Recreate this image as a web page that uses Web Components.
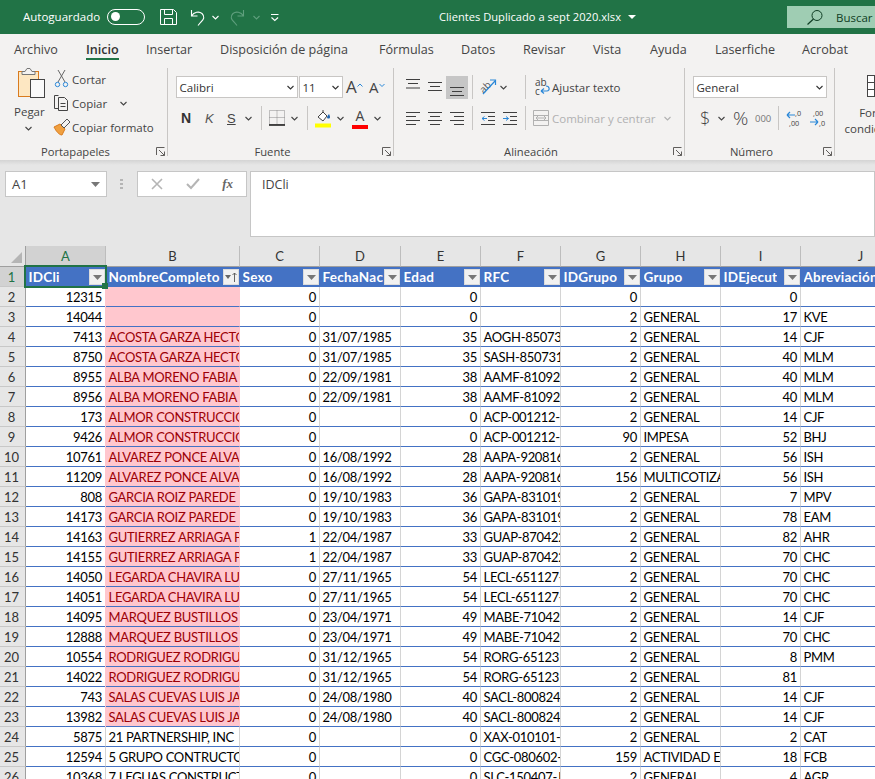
<!DOCTYPE html>
<html lang="es"><head><meta charset="utf-8"><title>Clientes Duplicado a sept 2020.xlsx</title>
<style>
html,body{margin:0;height:779px;overflow:hidden;background:#fff}
body{display:flex;flex-direction:column;width:875px;font-family:"Open Sans","Noto Sans",sans-serif}
</style></head><body>
<x-title-bar></x-title-bar>
<x-ribbon-tabs></x-ribbon-tabs>
<x-ribbon></x-ribbon>
<x-formula-bar></x-formula-bar>
<x-sheet></x-sheet>
<script>
const place=(start,items)=>{let c=start;return items.map(([x,w,h])=>{const m=x-c;c=x+w;return `<div class="it" style="margin-left:${m}px;width:${w}px">${h}</div>`}).join('')};
const chev=(col='#444')=>`<svg width="7" height="5" viewBox="0 0 7 5"><path d="M.5 1l3 3 3-3" fill="none" stroke="${col}" stroke-width="1.1"/></svg>`;
const svg=(w,h,body)=>`<svg width="${w}" height="${h}" viewBox="0 0 ${w} ${h}" style="display:block;flex:none">${body}</svg>`;
const lines=(w,h,arr,col='#3f3f3f')=>svg(w,h,arr.map(([x,y,l])=>`<path d="M${x} ${y}h${l}" stroke="${col}" fill="none"/>`).join(''));
class Base extends HTMLElement{constructor(){super();this.attachShadow({mode:'open'}).innerHTML=this.render()}render(){return ''}}

customElements.define('x-toggle',class extends Base{render(){return `<style>:host{display:block;width:38px;height:16px;box-sizing:border-box;border:1.4px solid #fff;border-radius:8px;margin-bottom:1px}
b{display:block;width:9px;height:9px;border-radius:50%;background:#fff;margin:2px 0 0 3px}</style><b></b>`}});

customElements.define('x-title-bar',class extends Base{render(){return `<style>
:host{display:flex;flex:none;height:34px;background:#217346;color:#fff;font:11.5px "Open Sans",sans-serif;align-items:center;overflow:hidden}
.it{flex:none;display:flex;align-items:center;white-space:nowrap}
.s{background:#9fcdb3;height:22px;color:#0f3d24;width:88px;font-size:11.5px}
</style>${place(0,[
[23,82,'<span style="margin-bottom:1px">Autoguardado</span>'],
[107,38,'<x-toggle></x-toggle>'],
[160,17,svg(17,16,'<path d="M.5.5h13l3 3v12H.5zM4.5.5v5h8v-5M4.5 15.5v-6h8v6" fill="none" stroke="#fff"/>')],
[190,16,svg(16,17,'<path d="M1.5 1v6h6M1.5 7C4 3 9 2 12 4.500c3 3 2 6-1 8.500l-3 3.500" fill="none" stroke="#fff" stroke-width="1.100"/>')],
[212,7,chev('#fff')],
[229,16,svg(16,17,'<path d="M14.500 1v6h-6M14.500 7C12 3 7 2 4 4.500c-3 3-2 6 1 8.500l3 3.500" fill="none" stroke="#5f9f7d" stroke-width="1.100"/>')],
[253,7,chev('#5f9f7d')],
[271,8,svg(8,9,'<path d="M0 1.500h7.500" stroke="#fff"/><path d="M.5 4.500l3.300 3 3.300-3" fill="none" stroke="#fff" stroke-width="1.100"/>')],
[439,184,'<span style="font-size:11.15px;margin-bottom:2px">Clientes Duplicado a sept 2020.xlsx</span>'],
[628,8,svg(8,4,'<path d="M0 0h8L4 4z" fill="#fff"/>')],
[787,88,`<div class="it s">${svg(49,16,'<circle cx="30" cy="6.500" r="5" fill="none" stroke="#0f3d24"/><path d="M26.500 10L20.500 15.500" stroke="#0f3d24" stroke-width="1.200"/>')}<span>Buscar</span></div>`]
])}`}});

customElements.define('x-ribbon-tabs',class extends Base{render(){
const t=[['Archivo',14],['Inicio',86],['Insertar',146],['Disposición de página',220],['Fórmulas',379],['Datos',461],['Revisar',523],['Vista',593],['Ayuda',650],['Laserfiche',715],['Acrobat',802]];
return `<style>:host{display:flex;flex:none;height:30px;background:#f3f2f1;color:#444;font:12.6px "Open Sans",sans-serif;overflow:hidden}
.it{flex:none;height:30px;line-height:32px;white-space:nowrap}
.on{font-weight:600;color:#333;display:inline-block;width:33px;height:24px;border-bottom:2.5px solid #217346;box-sizing:content-box;line-height:32px}
</style>${place(0,t.map(([n,x],i)=>[x,(i<t.length-1?t[i+1][1]-x-4:60),i==1?`<span class="on">${n}</span>`:n]))}`}});

customElements.define('x-ribbon-group',class extends Base{render(){return `<style>
:host{display:flex;flex:none;height:96px}
.m{flex:1;min-width:0;display:flex;flex-direction:column}
.c{height:78px;display:flex;flex-direction:column}
.f{height:18px;display:flex;align-items:center;font-size:11.2px;color:#444;line-height:18px}
.l{flex:1;text-align:center;white-space:nowrap;padding-top:2px}
.la{width:16px;flex:none;display:flex;justify-content:flex-end;padding-right:2px;box-sizing:border-box}
.sep{flex:none;width:1px;height:88px;margin-top:4px;background:#c8c6c4}
</style><div class="m"><div class="c"><slot></slot></div><div class="f"><span class="l"></span><span class="la">${svg(9,9,'<path d="M.5 8V.5H8.500" fill="none" stroke="#605e5c"/><path d="M3 3l5.500 5.500M8.500 4.500v4h-4" fill="none" stroke="#605e5c"/>')}</span></div></div><div class="sep"></div>`}
connectedCallback(){this.shadowRoot.querySelector('.l').textContent=this.getAttribute('label')}});

customElements.define('x-combo',class extends Base{render(){return `<style>
:host{display:flex;box-sizing:border-box;height:22px;width:100%;background:#fff;border:1px solid #c8c6c4;align-items:center;justify-content:space-between;padding:0 3px 0 2.5px;font-size:11.5px;color:#333}
</style><span><slot></slot></span>${chev('#333')}`}});

customElements.define('x-ribbon',class extends Base{render(){
const L=(a)=>lines(14,24,a);
const sep=(h=24)=>`<i style="display:block;width:1px;height:${h}px;background:#c8c6c4"></i>`;
const d='#b1b1b1';
return `<style>
:host{display:flex;flex:none;height:96px;background:#f3f2f1;color:#444;font:11.5px "Open Sans",sans-serif;overflow:hidden}
.it{flex:none;display:flex;align-items:center;white-space:nowrap;height:24px}
.row{display:flex;height:24px;align-items:center}
.r1{margin-top:11px}.r2{margin-top:7px}
.clip{display:flex}
.pcol{flex:none;margin-left:14px;width:32px;display:flex;flex-direction:column}
.pcol span{display:block;line-height:16px;margin-top:2px;white-space:nowrap}
.rows{display:flex;flex-direction:column;margin-left:7px;margin-top:3px}
.rows .row{height:24px}
.n{font:bold 14px "Liberation Sans",sans-serif;color:#333}
.k{font:italic 13px "Liberation Sans",sans-serif;color:#555}
.u{font:13px "Liberation Sans",sans-serif;text-decoration:underline;color:#444}
.off{color:${d};margin-top:1px}
.sel{background:#c6c6c6;height:23px;width:22px;display:flex;justify-content:center;align-items:center}
.fmt{width:86px;text-align:center;display:flex;flex-direction:column;align-items:center;line-height:16px;padding-top:11px;white-space:nowrap;flex:none}
.fmt span{display:block}
svg text{font-family:"Open Sans",sans-serif}
</style>
<x-ribbon-group label="Portapapeles" style="width:168px"><div class="clip">
 <div class="pcol">
  ${svg(32,38,`<g transform="translate(-1 2)"><rect x="5.500" y="5.500" width="20" height="25" fill="#fde7c2" stroke="#d97b1e"/><path d="M9 5.500h3l2-3h3l2 3h3v3H9z" fill="#f3f2f1" stroke="#777"/><rect x="17.500" y="13.500" width="14" height="18" fill="#f9f9f9" stroke="#444"/></g>`)}
  <span>Pegar</span>
  <div style="margin:6px 0 0 11px;line-height:0">${chev()}</div>
 </div>
 <div class="rows">
  <div class="row">${svg(19,18,'<g fill="none"><path d="M5 0l7 12M12 0L5 12" stroke="#666"/><circle cx="4.500" cy="14.500" r="2.200" stroke="#2b88d8"/><circle cx="12.500" cy="14.500" r="2.200" stroke="#2b88d8"/></g>')}<span>Cortar</span></div>
  <div class="row">${svg(19,18,'<path d="M5.500 1.500H1.500v13H5M5.500 3.500h6l3 3v10h-9z" fill="none" stroke="#444"/><path d="M7.500 9.500h5M7.500 12.500h5" stroke="#444"/>')}<span>Copiar</span><span style="margin-left:13px;line-height:0">${chev()}</span></div>
  <div class="row">${svg(19,18,'<path d="M1 9l6-3 5 5-3 6c-3 0-6-4-8-8z" fill="#f0a040" stroke="#d97b1e"/><path d="M8 7l6-6 3 3-6 6z" fill="#f3f2f1" stroke="#555"/>')}<span>Copiar formato</span></div>
 </div>
</div></x-ribbon-group>
<x-ribbon-group label="Fuente" style="width:226px">
 <div class="row r1">${place(168,[
 [176,122,'<x-combo>Calibri</x-combo>'],
 [299,44,'<x-combo>11</x-combo>'],
 [346,17,`<span style="font-size:17px;line-height:24px">A</span>${svg(6,10,'<path d="M.5 4.500l2.500-2.500 2.500 2.500" fill="none" stroke="#2b88d8"/>')}`],
 [369,17,`<span style="font-size:15px;line-height:24px">A</span>${svg(6,10,'<path d="M.5 2l2.500 2.500L5.500 2" fill="none" stroke="#2b88d8"/>')}`]
 ])}</div>
 <div class="row r2">${place(168,[
 [181,11,'<span class="n">N</span>'],
 [205,8,'<span class="k">K</span>'],
 [227,9,'<span class="u">S</span>'],
 [245,7,chev()],
 [261,1,sep()],
 [269,16,svg(16,18,'<path d="M.5 1.500h15v14H.5z" fill="none" stroke="#8a8a8a" stroke-dasharray="1 1"/><path d="M8 1.500v14M.5 8.500h15" stroke="#8a8a8a" stroke-dasharray="1 1"/><path d="M0 16h16" stroke="#222" stroke-width="1.600"/>')],
 [291,7,chev()],
 [307,1,sep()],
 [315,16,svg(16,20,'<path d="M3 9l5-5 4 4-4 5z" fill="#fff" stroke="#444"/><path d="M8 2v3" stroke="#444"/><path d="M12 9c1-2 2-3 2-3s1 2 1 3-.5 1.500-1.500 1.500S12 10 12 9z" fill="#2266b0"/><rect y="15.500" width="16" height="4" fill="#ffff00"/>')],
 [337,7,chev()],
 [352,16,`<div style="width:16px;height:24px;text-align:center"><span style="font-size:14px;line-height:20px">A</span><i style="display:block;background:#ff0000;height:4px;margin-top:-1px"></i></div>`],
 [374,7,chev()]
 ])}</div>
</x-ribbon-group>
<x-ribbon-group label="Alineación" style="width:291px">
 <div class="row r1">${place(394,[
 [406,14,L([[0,4.500,14],[2,8.500,10],[0,13,14]])],
 [428,14,L([[0,7.500,14],[2,11.500,10],[0,15.500,14]])],
 [446,22,`<div class="sel">${L([[0,12.500,14],[2,16.500,10],[0,20.500,14]])}</div>`],
 [472,1,sep()],
 [480,17,svg(17,20,'<text x="0" y="14" font-size="10" fill="#555" transform="rotate(-45 5 11)">ab</text><path d="M3 17L15 4M10 3h5.500v5" fill="none" stroke="#2b88d8" stroke-width="1.200"/>')],
 [500,7,chev()],
 [525,1,sep(24)],
 [535,17,svg(17,20,'<text x="0" y="9" font-size="10" fill="#444">ab</text><text x="0" y="18" font-size="10" fill="#444">c</text><path d="M6 14h6c3 0 3-5-1-5M6 14l3-2.500M6 14l3 2.500" fill="none" stroke="#2b88d8" stroke-width="1.200"/>')],
 [552,70,'<span>Ajustar texto</span>']
 ])}</div>
 <div class="row r2">${place(394,[
 [406,14,L([[0,6.500,14],[0,10.500,10],[0,14.500,14],[0,18.500,10]])],
 [428,14,L([[0,6.500,14],[2,10.500,10],[0,14.500,14],[2,18.500,10]])],
 [450,14,L([[0,6.500,14],[4,10.500,10],[0,14.500,14],[4,18.500,10]])],
 [472,1,sep()],
 [481,14,svg(14,24,'<path d="M0 6.500h14M7 10.500h7M7 14.500h7M0 18.500h14" stroke="#3f3f3f"/><path d="M1 12.500h5M1 12.500l2.500-2M1 12.500l2.500 2" fill="none" stroke="#2b88d8"/>')],
 [503,14,svg(14,24,'<path d="M0 6.500h14M7 10.500h7M7 14.500h7M0 18.500h14" stroke="#3f3f3f"/><path d="M0 12.500h5.500M5.500 12.500L3 10.500M5.500 12.500L3 14.500" fill="none" stroke="#2b88d8"/>')],
 [525,1,sep(24)],
 [533,16,svg(16,16,`<path d="M.5.500h15v15H.5zM.5 5.500h15M.5 10.500h15" fill="none" stroke="${d}"/><path d="M3 8h10M3 8l2-2M3 8l2 2M13 8l-2-2M13 8l-2 2" fill="none" stroke="${d}"/>`)],
 [552,104,'<span class="off">Combinar y centrar</span>'],
 [664,7,chev(d)]
 ])}</div>
</x-ribbon-group>
<x-ribbon-group label="Número" style="width:150px">
 <div class="row r1">${place(685,[[693,134,'<x-combo>General</x-combo>']])}</div>
 <div class="row r2">${place(685,[
 [700,12,'<span style="font-size:18px;font-weight:300;color:#444">$</span>'],
 [718,7,chev()],
 [733,17,'<span style="font-size:19px;font-weight:300;color:#444">%</span>'],
 [755,17,'<span style="font-size:9.5px;color:#777">000</span>'],
 [778,1,sep()],
 [786,17,svg(17,20,'<path d="M1 7h8M1 7l3-3M1 7l3 3" fill="none" stroke="#2b88d8" stroke-width="1.200"/><text x="9" y="8" font-size="7.300" fill="#444">,0</text><text x="3" y="18" font-size="7.300" fill="#444">,00</text>')],
 [809,17,svg(17,20,'<text x="4" y="8" font-size="7.300" fill="#444">,00</text><text x="10" y="18" font-size="7.300" fill="#444">,0</text><path d="M1 14h8M9 14l-3-3M9 14l-3 3" fill="none" stroke="#2b88d8" stroke-width="1.200"/>')]
 ])}</div>
</x-ribbon-group>
<div class="fmt">${svg(22,22,'<rect x=".5" y=".5" width="21" height="21" fill="#fff" stroke="#444"/><rect x="8" y="1" width="13" height="6" fill="#e8413c"/><rect x="8" y="8" width="13" height="6" fill="#2b88d8"/><rect x="8" y="15" width="13" height="6" fill="#e8413c"/><path d="M.5 7.500h21M.5 14.500h21M7.500 .5v21" stroke="#444"/>')}<span style="margin-top:8px;padding-left:8px">Formato</span><span style="padding-right:6px">condicional</span></div>
`}});

customElements.define('x-formula-bar',class extends Base{render(){return `<style>
:host{display:flex;flex:none;height:86px;box-sizing:border-box;background:linear-gradient(#d4d4d4,#e6e6e6 5px);font:12px "Open Sans",sans-serif;color:#444}
.box{flex:none;background:#fff;border:1px solid #c6c6c6;box-sizing:border-box;height:26px;margin-top:11px;display:flex;align-items:center}
.name{margin-left:5px;width:102px;padding:0 6px;justify-content:space-between;font-size:13px}
.dots{flex:none;width:3px;margin:19px 0 0 13px;height:11px;background:repeating-linear-gradient(#b5b5b5 0 2px,transparent 2px 4px)}
.fn{margin-left:14px;width:110px;justify-content:space-between;padding:0 13px 0 13px}
.in{margin:11px 0 0 3px;flex:1;background:#fff;border:1px solid #c6c6c6;height:66px;box-sizing:border-box;padding:4px 11px;font-size:12.5px;line-height:18px}
</style>
<div class="box name"><span>A1</span>${svg(9,5,'<path d="M0 0h9L4.500 5z" fill="#777"/>')}</div>
<div class="dots"></div>
<div class="box fn">${svg(12,12,'<path d="M1 1l10 10M11 1L1 11" stroke="#b5b5b5" stroke-width="1.600" fill="none"/>')}${svg(14,12,'<path d="M1 6l4 4 8-9" stroke="#b5b5b5" stroke-width="2" fill="none"/>')}<span style="font:italic bold 13px 'Liberation Serif',serif;color:#666">fx</span></div>
<div class="in">IDCli</div>`}});

customElements.define('x-filter',class extends Base{render(){return `<style>
:host{flex:none;display:flex;align-items:center;justify-content:center;gap:1px;box-sizing:border-box;width:16px;height:16px;background:#f1f1f1;border:1px solid #dcdcdc}
</style><slot></slot>`}});

const G='GENERAL';
const DATA=[
[12315,'',0,'',0,'',0,'',0,''],
[14044,'',0,'',0,'',2,G,17,'KVE'],
[7413,'ACOSTA GARZA HECTO',0,'31/07/1985',35,'AOGH-85073',2,G,14,'CJF'],
[8750,'ACOSTA GARZA HECTO',0,'31/07/1985',35,'SASH-850731',2,G,40,'MLM'],
[8955,'ALBA MORENO FABIA',0,'22/09/1981',38,'AAMF-81092',2,G,40,'MLM'],
[8956,'ALBA MORENO FABIA',0,'22/09/1981',38,'AAMF-81092',2,G,40,'MLM'],
[173,'ALMOR CONSTRUCCIO',0,'',0,'ACP-001212-',2,G,14,'CJF'],
[9426,'ALMOR CONSTRUCCIO',0,'',0,'ACP-001212-',90,'IMPESA',52,'BHJ'],
[10761,'ALVAREZ PONCE ALVA',0,'16/08/1992',28,'AAPA-920816',2,G,56,'ISH'],
[11209,'ALVAREZ PONCE ALVA',0,'16/08/1992',28,'AAPA-920816',156,'MULTICOTIZA',56,'ISH'],
[808,'GARCIA ROIZ PAREDE',0,'19/10/1983',36,'GAPA-831019',2,G,7,'MPV'],
[14173,'GARCIA ROIZ PAREDE',0,'19/10/1983',36,'GAPA-831019',2,G,78,'EAM'],
[14163,'GUTIERREZ ARRIAGA P',1,'22/04/1987',33,'GUAP-870422',2,G,82,'AHR'],
[14155,'GUTIERREZ ARRIAGA P',1,'22/04/1987',33,'GUAP-870422',2,G,70,'CHC'],
[14050,'LEGARDA CHAVIRA LU',0,'27/11/1965',54,'LECL-651127-',2,G,70,'CHC'],
[14051,'LEGARDA CHAVIRA LU',0,'27/11/1965',54,'LECL-651127-',2,G,70,'CHC'],
[14095,'MARQUEZ BUSTILLOS',0,'23/04/1971',49,'MABE-71042',2,G,14,'CJF'],
[12888,'MARQUEZ BUSTILLOS',0,'23/04/1971',49,'MABE-71042',2,G,70,'CHC'],
[10554,'RODRIGUEZ RODRIGU',0,'31/12/1965',54,'RORG-651231',2,G,8,'PMM'],
[14022,'RODRIGUEZ RODRIGU',0,'31/12/1965',54,'RORG-651231',2,G,81,''],
[743,'SALAS CUEVAS LUIS JA',0,'24/08/1980',40,'SACL-800824',2,G,14,'CJF'],
[13982,'SALAS CUEVAS LUIS JA',0,'24/08/1980',40,'SACL-800824',2,G,14,'CJF'],
[5875,'21 PARTNERSHIP, INC',0,'',0,'XAX-010101-',2,G,2,'CAT'],
[12594,'5 GRUPO CONTRUCTO',0,'',0,'CGC-080602-',159,'ACTIVIDAD E',18,'FCB'],
[10368,'7 LEGUAS CONSTRUCT',0,'',0,'SLC-150407-J',2,G,4,'AGR']];
const HEAD=['IDCli','NombreCompleto','Sexo','FechaNac','Edad','RFC','IDGrupo','Grupo','IDEjecut','Abreviación'];
const TRI=svg(9,5,'<path d="M0 0h9L4.500 5z" fill="#777"/>');
const SORT=svg(6,4,'<path d="M0 0h6L3 4z" fill="#666"/>')+svg(5,10,'<path d="M2.500 1v9M.5 3l2-2 2 2" fill="none" stroke="#555" stroke-width=".9"/>');

customElements.define('x-sheet',class extends Base{render(){
let h=`<div class="ch corner">${svg(25,20,'<path d="M22 6v11H11z" fill="#b5b5b5"/>')}</div>`;
'ABCDEFGHIJ'.split('').forEach((c,i)=>h+=`<div class="ch${i==0?' act':''}">${c}</div>`);
h+=`<div class="rh act">1</div>`;
HEAD.forEach((t,i)=>h+=`<div class="th"><span>${t}</span>${i<9?`<x-filter>${i==1?SORT:TRI}</x-filter>`:''}</div>`);
DATA.forEach((r,k)=>{
 const pink=k<22;
 h+=`<div class="rh">${k+2}</div>`;
 r.forEach((v,i)=>{const num=typeof v==='number';
  h+=`<div class="td${num?' num':''}${i==1&&pink?' pink':''}">${v}</div>`});
});
return `<style>
:host{display:block;flex:none;position:relative;height:533px;overflow:hidden;background:#fff;font:13px Lato,sans-serif;color:#000}
.g{display:grid;grid-template-columns:26px 80px 134px 80px 81px 80px 80px 80px 80px 80px 120px;grid-template-rows:21px;grid-auto-rows:20px;width:921px}
.ch{height:21px;box-sizing:border-box;background:#e6e6e6;border-right:1px solid #bdbdbd;border-bottom:1px solid #9f9f9f;text-align:center;line-height:20px;color:#333}
.corner{border-right-color:#9f9f9f}
.rh{background:#e6e6e6;box-sizing:border-box;border-right:1px solid #9f9f9f;border-bottom:1px solid #c8c8c8;text-align:center;line-height:20px;color:#333;padding-right:2px}
.act{background:#d2d2d2;color:#217346}
.th{background:#4472c4;color:#fff;font-weight:700;font-size:13.5px;letter-spacing:.25px;display:flex;align-items:center;justify-content:space-between;padding:0 1px 0 2.5px;overflow:hidden;white-space:nowrap;min-width:0}
.th span{overflow:hidden}
.td{box-sizing:border-box;border-right:1px solid #d4d4d4;border-bottom:1px solid #4472c4;padding:0 3px 0 2.5px;line-height:20px;overflow:hidden;white-space:nowrap;letter-spacing:-.3px}
.num{text-align:right}
.pink{background:#ffc7ce;color:#9c0006;border-right-color:#ffc7ce;box-shadow:-1px 0 0 #ffc7ce}
.sel{position:absolute;left:24px;top:19px;width:83px;height:23px;box-sizing:border-box;border:2px solid #217346}
.sel i{position:absolute;right:-3px;bottom:-3px;width:6px;height:6px;background:#217346}
</style><div class="g">${h}</div><div class="sel"><i></i></div>`}});
</script>
</body></html>
